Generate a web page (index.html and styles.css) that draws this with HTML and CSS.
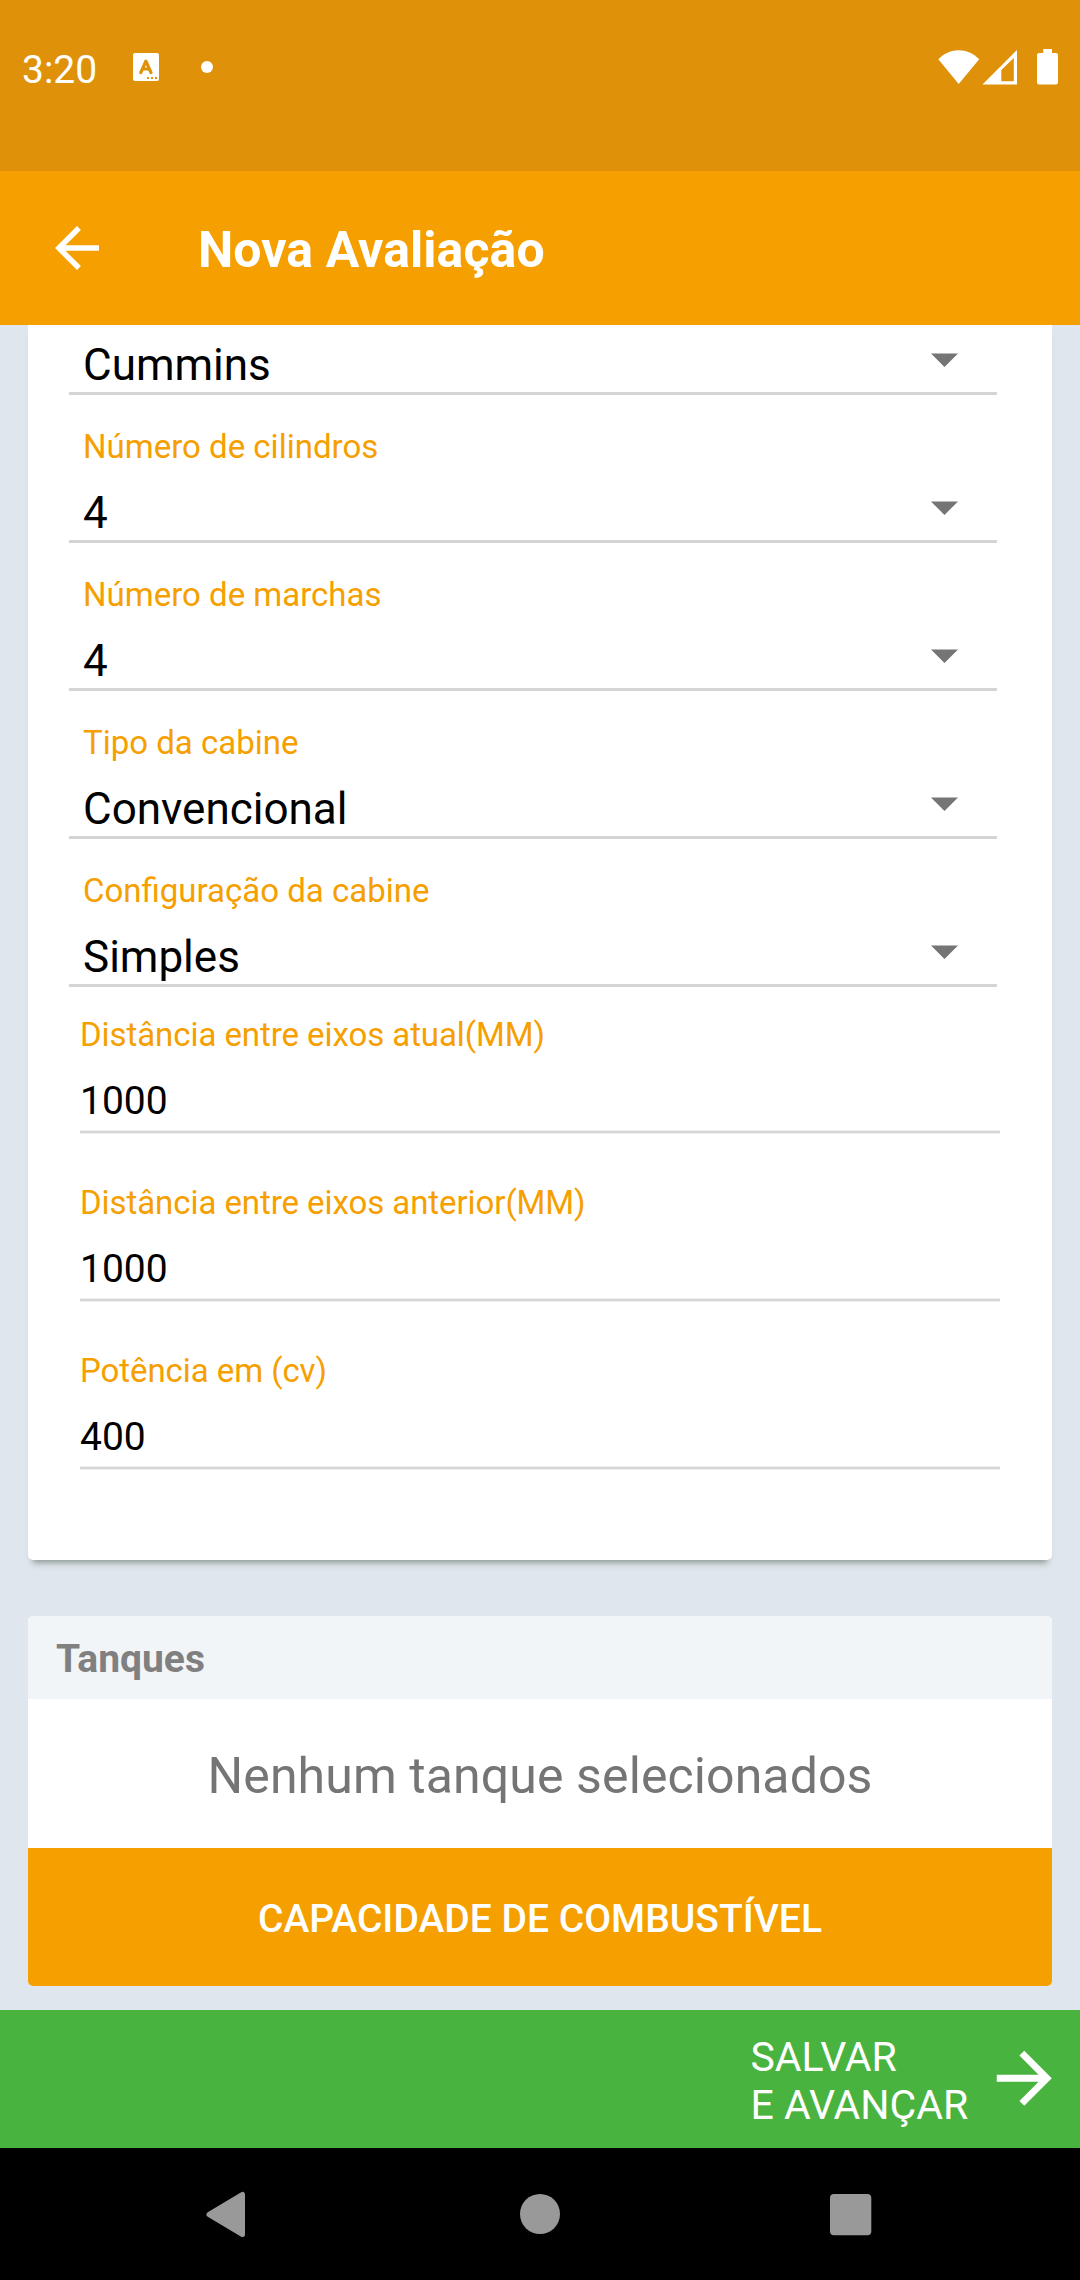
FILE: index.html
```html
<!DOCTYPE html>
<html lang="pt-BR">
<head>
<meta charset="utf-8">
<title>Nova Avaliação</title>
<link rel="stylesheet" href="styles.css">
</head>
<body>
<div class="screen">
  <header class="status-bar">
    <span class="clock">3:20</span>
    <svg class="status-app" viewBox="0 0 26 28"><rect width="26" height="28" rx="2" fill="#fff"/><path d="M7.800 19.600 12.900 8.200 18 19.600M9.600 16h6.600" fill="none" stroke="#df9109" stroke-width="3.200" stroke-linecap="round" stroke-linejoin="round"/><path d="M14 24h2v2h-2zM18 24h2v2h-2zM22 24h2v2h-2z" fill="#df9109"/></svg>
    <span class="status-dot"></span>
    <svg class="status-system" viewBox="0 0 122 36" fill="#fff"><path d="M.3 10.200C12 -1.800 29.500 -1.800 41.200 10.200L20.700 35z"/><path fill-rule="evenodd" d="M44.500 35.500 79 1V35.500ZM63.300 21V32.200H75.800V9Z"/><path d="M105.200 0h8.800v4h4a2 2 0 0 1 2 2v27.500a2 2 0 0 1-2 2h-17a2 2 0 0 1-2-2V6a2 2 0 0 1 2-2h4.200z"/></svg>
  </header>
  <div class="app-bar">
    <svg class="back" viewBox="0 0 24 24" fill="#fff"><path d="M20 11H7.830l5.590-5.590L12 4l-8 8 8 8 1.410-1.410L7.830 13H20z"/></svg>
    <h1 class="title">Nova Avaliação</h1>
  </div>
  <main class="content">
    <section class="card form-card">
      <div class="select first">
        <div class="select-value"><span>Cummins</span><svg class="caret" viewBox="0 0 27 14"><path d="M0 .4h27L13.500 14z"/></svg></div>
      </div>
      <div class="select">
        <label class="label">Número de cilindros</label>
        <div class="select-value"><span>4</span><svg class="caret" viewBox="0 0 27 14"><path d="M0 .4h27L13.500 14z"/></svg></div>
      </div>
      <div class="select">
        <label class="label">Número de marchas</label>
        <div class="select-value"><span>4</span><svg class="caret" viewBox="0 0 27 14"><path d="M0 .4h27L13.500 14z"/></svg></div>
      </div>
      <div class="select">
        <label class="label">Tipo da cabine</label>
        <div class="select-value"><span>Convencional</span><svg class="caret" viewBox="0 0 27 14"><path d="M0 .4h27L13.500 14z"/></svg></div>
      </div>
      <div class="select">
        <label class="label">Configuração da cabine</label>
        <div class="select-value"><span>Simples</span><svg class="caret" viewBox="0 0 27 14"><path d="M0 .4h27L13.500 14z"/></svg></div>
      </div>
      <div class="inputs">
        <div class="input"><label class="label">Distância entre eixos atual(MM)</label><div class="input-value">1000</div></div>
        <div class="input"><label class="label">Distância entre eixos anterior(MM)</label><div class="input-value">1000</div></div>
        <div class="input"><label class="label">Potência em (cv)</label><div class="input-value">400</div></div>
      </div>
    </section>
    <section class="card tanks">
      <h2 class="tanks-title">Tanques</h2>
      <p class="tanks-empty">Nenhum tanque selecionados</p>
      <div class="tanks-button">CAPACIDADE DE COMBUSTÍVEL</div>
    </section>
  </main>
  <div class="save-bar">
    <span class="save-text">SALVAR<br>E AVANÇAR</span>
    <svg class="forward" viewBox="0 0 24 24" fill="#fff"><path d="M12 4l-1.410 1.410L16.170 11H4v2h12.170l-5.580 5.590L12 20l8-8z"/></svg>
  </div>
  <nav class="nav-bar">
    <svg viewBox="0 0 48 48"><path d="M37.500 4.500v40L4 24.500z" stroke="#999" stroke-width="5" stroke-linejoin="round"/></svg>
    <svg viewBox="0 0 48 48"><circle cx="24" cy="24" r="20"/></svg>
    <svg viewBox="0 0 48 48"><rect x="3" y="4" width="41.300" height="41.300" rx="4"/></svg>
  </nav>
</div>
</body>
</html>
```
FILE: styles.css
```css
* { box-sizing: border-box; margin: 0; padding: 0; }
body { font-family: Roboto, "Liberation Sans", sans-serif; background: #dfe6ed; }
svg { display: block; flex: none; }

.screen { width: 1080px; height: 2280px; display: flex; flex-direction: column; overflow: hidden; }

.status-bar { height: 171px; flex: none; display: flex; align-items: flex-start; padding: 49px 20px 0 22px; background: #df9109; color: #fff; }
.clock { width: 111px; font-size: 39px; line-height: 42px; white-space: nowrap; }
.status-app { width: 26px; height: 28px; margin-top: 4px; }
.status-dot { width: 12px; height: 12px; margin: 12px 0 0 42px; border-radius: 50%; background: #fff; }
.status-system { width: 122px; height: 36px; margin-left: auto; }

.app-bar { height: 154px; flex: none; display: flex; align-items: center; padding-left: 44px; background: #f5a000; color: #fff; }
.back { width: 66px; height: 66px; }
.title { margin: 4px 0 0 88px; font-size: 50px; line-height: 60px; font-weight: 700; letter-spacing: .08px; }

.content { flex: none; height: 1685px; padding: 0 28px; overflow: hidden; }
.card { border-radius: 5px; background: #fff; overflow: hidden; }
.form-card { height: 1235px; border-top-left-radius: 0; border-top-right-radius: 0; padding: 0 52px 90px 41px; box-shadow: 0 7px 6px -5px rgba(50, 70, 60, .5), 0 10px 4px -4px rgba(190, 205, 195, .25); }

.label { display: block; font-size: 33px; line-height: 40px; color: #f5a000; }
.select { height: 148px; margin-right: 3px; padding: 32px 39px 0 14px; border-bottom: 3px solid #d5d5d5; }
.select.first { height: 70px; padding-top: 14px; }
.select-value { display: flex; align-items: center; justify-content: space-between; font-size: 44px; line-height: 52px; color: #000; }
.label + .select-value { margin-top: 20px; }
.caret { width: 27px; height: 14px; margin-bottom: 10px; fill: #757575; }

.inputs { display: flex; flex-direction: column; gap: 21px; padding-left: 11px; }
.inputs .label { letter-spacing: -.07px; }
.input { height: 147px; padding-top: 28px; }
.input-value { height: 79px; padding-top: 23px; font-size: 39px; line-height: 46px; color: #000; background: linear-gradient(#f0f0f0 1px, #d5d5d5 1px 3px, #f0f0f0 3px) left bottom / 100% 4px no-repeat; }

.tanks { margin-top: 56px; }
.tanks-title { height: 83px; padding: 20px 28px 0; font-size: 39px; line-height: 46px; font-weight: 700; color: #808080; background: #f1f5f8; }
.tanks-empty { height: 149px; padding-top: 47px; font-size: 50px; line-height: 60px; letter-spacing: .1px; text-align: center; color: #757575; }
.tanks-button { height: 138px; padding-top: 48px; font-size: 39px; line-height: 46px; font-weight: 500; text-align: center; color: #fff; background: #f5a000; }

.save-bar { height: 138px; flex: none; display: flex; align-items: flex-start; justify-content: flex-end; padding-right: 15px; background: #49b33f; color: #fff; }
.save-text { width: 232px; margin-top: 23px; font-size: 41px; line-height: 48px; white-space: nowrap; }
.forward { width: 82.5px; height: 82.5px; margin-top: 27px; }

.nav-bar { height: 132px; flex: none; display: flex; justify-content: space-between; padding: 42px 205px 0; background: #000; fill: #999; }
.nav-bar svg { width: 48px; height: 48px; }
```
